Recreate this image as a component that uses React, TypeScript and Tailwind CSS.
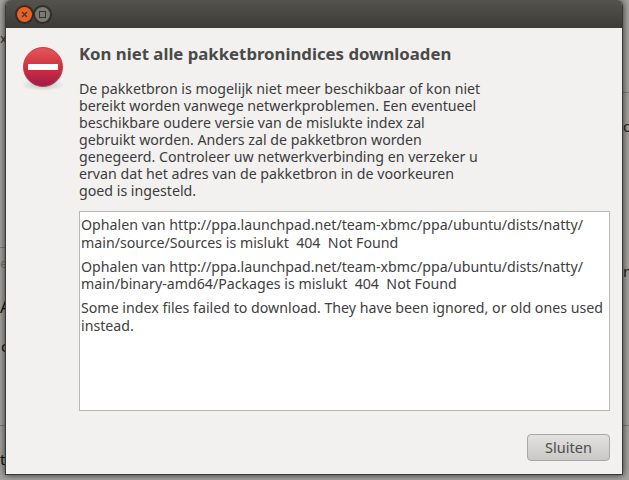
const body = [
  "De pakketbron is mogelijk niet meer beschikbaar of kon niet",
  "bereikt worden vanwege netwerkproblemen. Een eventueel",
  "beschikbare oudere versie van de mislukte index zal",
  "gebruikt worden. Anders zal de pakketbron worden",
  "genegeerd. Controleer uw netwerkverbinding en verzeker u",
  "ervan dat het adres van de pakketbron in de voorkeuren",
  "goed is ingesteld.",
];

const log = [
  [
    "Ophalen van http://ppa.launchpad.net/team-xbmc/ppa/ubuntu/dists/natty/",
    "main/source/Sources is mislukt  404  Not Found",
  ],
  [
    "Ophalen van http://ppa.launchpad.net/team-xbmc/ppa/ubuntu/dists/natty/",
    "main/binary-amd64/Packages is mislukt  404  Not Found",
  ],
  [
    "Some index files failed to download. They have been ignored, or old ones used",
    "instead.",
  ],
];

const ErrorIcon = () => (
  <svg width="44" height="48" viewBox="0 0 44 48" className="shrink-0">
    <defs>
      <linearGradient id="disc" x1="0" y1="0" x2="0" y2="1">
        <stop offset="0" stopColor="#e0585e" />
        <stop offset="0.5" stopColor="#d2313b" />
        <stop offset="1" stopColor="#a3184e" />
      </linearGradient>
      <radialGradient id="shade" cx="0.5" cy="0.5" r="0.5">
        <stop offset="0" stopColor="#000" stopOpacity="0.2" />
        <stop offset="1" stopColor="#000" stopOpacity="0" />
      </radialGradient>
    </defs>
    <ellipse cx="20" cy="38" rx="22" ry="6" fill="url(#shade)" />
    <circle cx="20" cy="20" r="19.5" fill="url(#disc)" stroke="#c24048" strokeWidth="1" />
    <rect x="5" y="17" width="30" height="6" fill="#ffffff" />
  </svg>
);

export default function App() {
  return (
    <div className="relative h-[480px] w-[629px] overflow-hidden bg-[#a5a4a0] font-['Noto_Sans',sans-serif]">
      {/* stukjes van het venster erachter */}
      <div className="absolute left-0 top-[247px] h-[1px] w-[6px] bg-[#7f7e7a]" />
      <div className="absolute left-[622px] top-[92px] h-[1px] w-[7px] bg-[#7f7e7a]" />
      <div className="absolute left-0 top-[425px] h-[1px] w-[6px] bg-[#7f7e7a]" />
      <div className="absolute left-[622px] top-[425px] h-[1px] w-[7px] bg-[#7f7e7a]" />
      <span className="absolute left-0 top-[32px] text-[13px] leading-none text-[#333]">x</span>
      <span className="absolute left-0 top-[257px] text-[13px] leading-none text-[#777]">e</span>
      <span className="absolute left-0 top-[298px] text-[17px] leading-none text-[#111]">A</span>
      <span className="absolute left-[1px] top-[339px] text-[15px] leading-none text-[#111]">c</span>
      <span className="absolute left-0 top-[452px] text-[15px] leading-none text-[#111]">t</span>
      <span className="absolute left-[623px] top-[119px] text-[15px] leading-none text-[#222]">o</span>
      <span className="absolute left-[623px] top-[264px] text-[15px] leading-none text-[#222]">n</span>

      <div className="relative ml-[5px] flex h-[475px] w-[618px] flex-col overflow-hidden rounded-t-[6px] border-x border-b border-[#3a3936] shadow-[0_0_7px_rgba(0,0,0,0.75)]">
        <div className="flex h-[28px] shrink-0 items-center gap-[3px] bg-gradient-to-b from-[#55534d] to-[#3c3b37] pl-[11px]">
          <div className="flex h-[15px] w-[15px] items-center justify-center rounded-full bg-[#ee5f22] shadow-[0_0_0_2px_#2f2e2b]">
            <svg width="7" height="7" viewBox="0 0 7 7">
              <path d="M1 1l5 5M6 1L1 6" stroke="#3c3b37" strokeWidth="1.3" />
            </svg>
          </div>
          <div className="flex h-[15px] w-[15px] items-center justify-center rounded-full bg-[#7a7974] shadow-[0_0_0_2px_#2f2e2b]">
            <div className="h-[7px] w-[7px] border border-[#33322f]" />
          </div>
        </div>

        <div className="flex min-h-0 flex-1 flex-col bg-[#f2f1f0] pb-[13px] pl-[17px] pr-[12px] pt-[17px] text-[#3c3c3c]">
          <div className="flex flex-1 gap-[12px]">
            <div className="pt-[2px]">
              <ErrorIcon />
            </div>
            <div className="flex min-w-0 flex-1 flex-col">
              <h1 className="h-[35px] whitespace-nowrap text-[16.75px] font-bold leading-[17px] text-[#4a4a48]">
                Kon niet alle pakketbronindices downloaden
              </h1>
              <div className="whitespace-nowrap text-[14.2px] leading-[17px]">
                {body.map((line) => (
                  <div key={line}>{line}</div>
                ))}
              </div>
              <div className="mt-[12px] h-[200px] whitespace-pre border border-[#b9b7b3] bg-white px-[1px] pt-[4px] text-[14.2px] leading-[17.5px] text-[#404040]">
                {log.map((entry) => (
                  <div key={entry[0]} className="mb-[6.5px]">
                    {entry.map((line) => (
                      <div key={line}>{line}</div>
                    ))}
                  </div>
                ))}
              </div>
            </div>
          </div>
          <div className="flex justify-end">
            <button className="h-[27px] w-[83px] rounded-[4px] border border-[#a9a8a5] bg-gradient-to-b from-[#e3e2e0] to-[#c9c8c5] text-[14.5px] leading-none text-[#4c4c4c]">
              Sluiten
            </button>
          </div>
        </div>
      </div>
    </div>
  );
}
